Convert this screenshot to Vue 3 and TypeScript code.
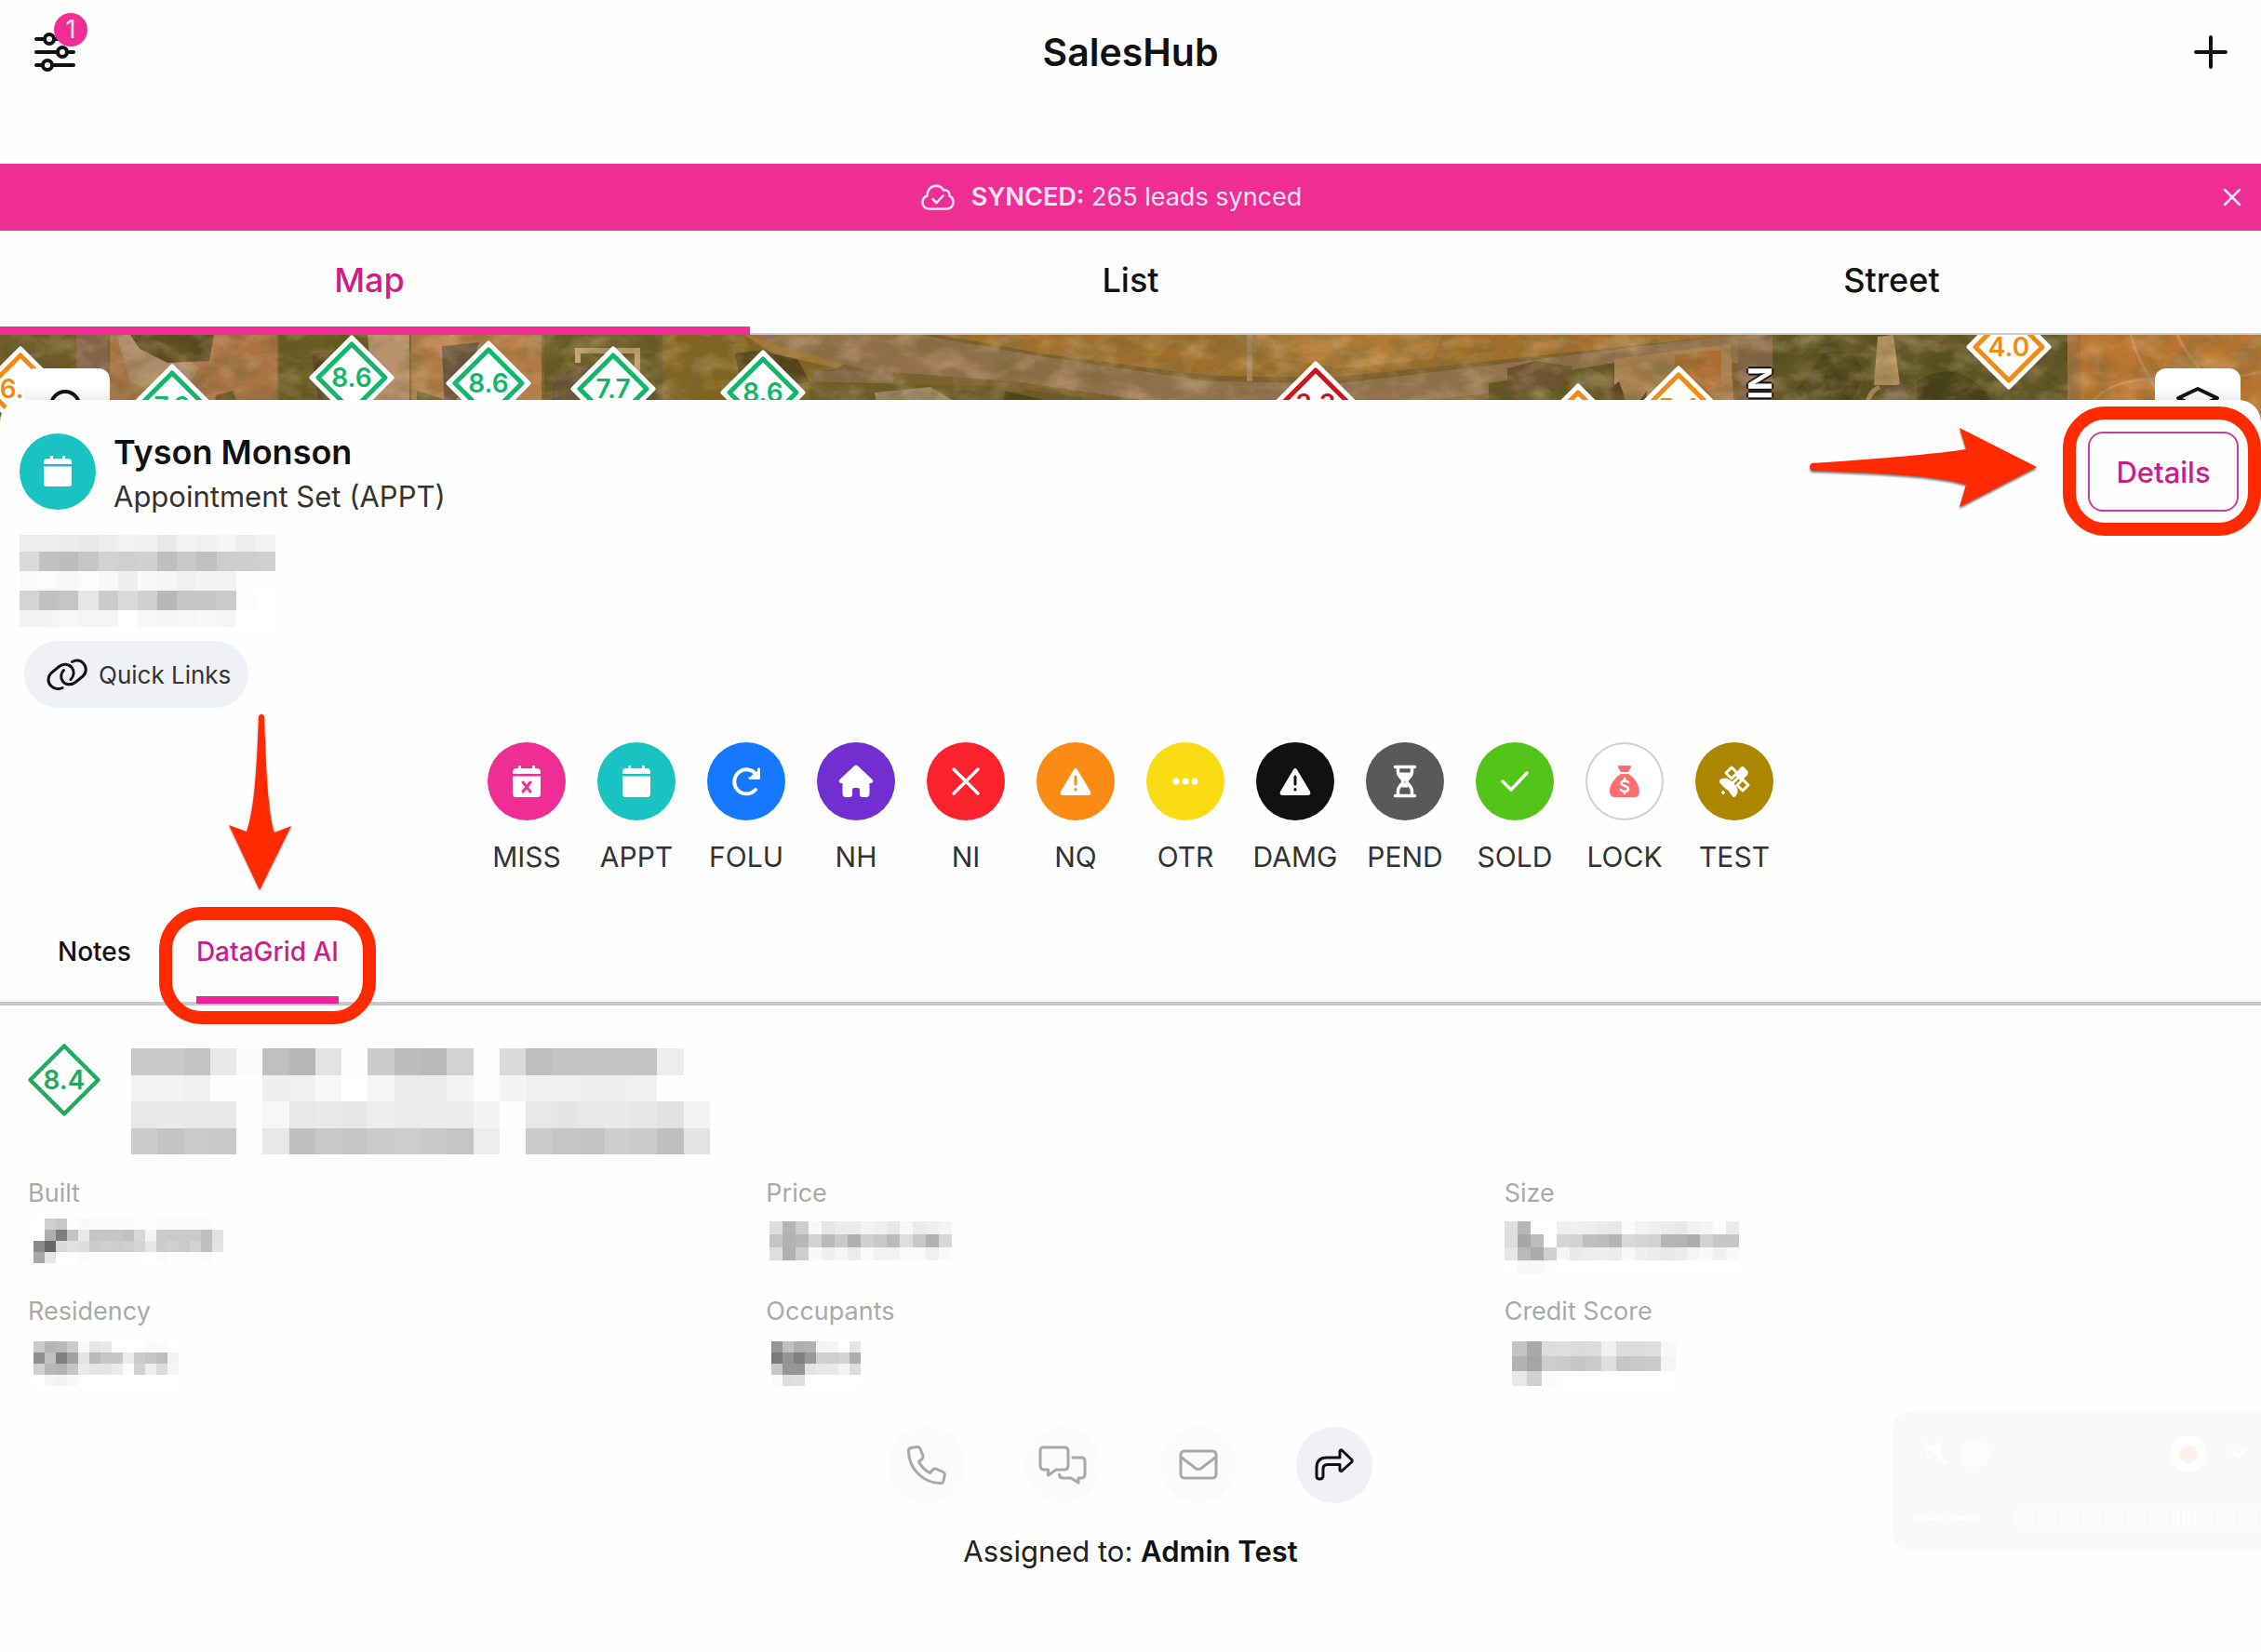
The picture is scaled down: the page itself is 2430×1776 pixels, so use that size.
<script setup lang="ts">
import { h, ref } from 'vue'

interface Status { code: string; color: string; icon: string }
interface Pin { x: number; y: number; score: string; tone: string }
interface Fact { label: string; cell: number; rows: string[]; inset: number; drop: number }

const views = ['Map', 'List', 'Street']
const activeView = ref('Map')
const bannerOpen = ref(true)

const statuses: Status[] = [
  { code: 'MISS', color: '#ee2e94', icon: 'calendar-x' },
  { code: 'APPT', color: '#18c3c2', icon: 'calendar' },
  { code: 'FOLU', color: '#1677ff', icon: 'redo' },
  { code: 'NH', color: '#722ed1', icon: 'home' },
  { code: 'NI', color: '#f9222d', icon: 'cross' },
  { code: 'NQ', color: '#fa8c16', icon: 'warning' },
  { code: 'OTR', color: '#fadb14', icon: 'dots' },
  { code: 'DAMG', color: '#111111', icon: 'warning' },
  { code: 'PEND', color: '#595959', icon: 'hourglass' },
  { code: 'SOLD', color: '#52c41a', icon: 'check' },
  { code: 'LOCK', color: '#ffffff', icon: 'moneybag' },
  { code: 'TEST', color: '#ad8600', icon: 'satellite' },
]

const green = '#12b76a'
const orange = '#f08c14'
const pins: Pin[] = [
  { x: 22, y: 58, score: '6.4', tone: orange },
  { x: 185, y: 77, score: '7.9', tone: green },
  { x: 378, y: 46, score: '8.6', tone: green },
  { x: 525, y: 52, score: '8.6', tone: green },
  { x: 659, y: 58, score: '7.7', tone: green },
  { x: 820, y: 62, score: '8.6', tone: green },
  { x: 1414, y: 74, score: '3.3', tone: '#c8161d' },
  { x: 1696, y: 98, score: '5.1', tone: orange },
  { x: 1804, y: 79, score: '5.4', tone: orange },
  { x: 2159, y: 13, score: '4.0', tone: orange },
]

// Each pair of hex digits is one grey cell of a redacted value.
const address = [
  'eeedebe9edf2f1e8f3f0f5edf3',
  'dac1bdc6d2cfd1bfc9c0cdced0',
  'fafcf7fcf8eff9f6f0f4f2fefe',
  'd4c0c5e6cbdad0b8c6c6cafdff',
  'f3f4f7f5f5fff8f6f7f9f5ffff',
]
const summary = [
  'c9c9c3e9fac0b6e3fdcbbdb9d2fddabec4c4c4c3edfe',
  'f3f3f0fdfeeff0f8fff5ebecf4fef4f0f1efeff0fefe',
  'e8eae9e8fef7e8eae7edebebecf4fee8e5e8eae7e1f3',
  'cbc4cac8fce8bfc8c5cbcdc9c5edfccbc5c4cecbbfe3',
]
const facts: Fact[] = [
  { label: 'Built', cell: 12, inset: 6, drop: 9, rows: [
    'ffcfc8fef9fbfbfbfbfdfefafbfafbfafe',
    'ffae7ec4e9c5c6c6c1d7f4cccacacabee2',
    '8a66dae2ddcccfcdcfd4e6ccd1cad2bfe3',
    'a8e6fffffbfefdfefdfdfffbfefcfefbfe'] },
  { label: 'Price', cell: 14, inset: 4, drop: 12, rows: [
    'deb4cef8e6ebebf3efe7f7ebeff4',
    'c5b2b7d2b9c9b0d0c9bbdfc8b1d7',
    'deb0cef9eff6ecfaf2f2fafaf0f9'] },
  { label: 'Size', cell: 14, inset: 0, drop: 12, rows: [
    'dfb6ffffeff0eeeae8fbf3efebe8f1f5fdeb',
    'dea6bcffd5d3bfbdb4d9d5d2b5b4add2c7c7',
    'e6b9abd0f6e9edeeebf8efebe8ecf5f9eff9',
    'fff8f8fcffffffffffffffffffffffffffff'] },
  { label: 'Residency', cell: 12, inset: 6, drop: 14, rows: [
    'cbb5b9cbf8e5e9fffffffafbff',
    '90c07fa1e4bac6c7eccbc5bef3',
    'd0b7b2c6eae5e4ebfbd1efddf5',
    'fff6f3f9ffffffffffffffffff'] },
  { label: 'Occupants', cell: 12, inset: 6, drop: 14, rows: [
    '96c0aeb1f3f5ffe5',
    '7a948098cfcfd3ae',
    'c79696e3e8e9f3dd',
    'fadddfffffffffff'] },
  { label: 'Credit Score', cell: 16, inset: 8, drop: 14, rows: [
    'c4a9dddedbddf0dddddef8',
    'b3a5cdcac6cae0c6c9caf5',
    'e8d1fbffffffffffffffff'] },
]

function Mosaic(props: { rows: string[]; cell: number; top?: number; width?: number; height?: number }) {
  const { rows, cell } = props
  const top = props.top ?? 0
  const columns = rows[0].length / 2
  const boxHeight = rows.length * cell - top * 2
  const cells = rows.flatMap((row, y) =>
    (row.match(/../g) ?? []).map((v, x) =>
      h('rect', { x: x * cell, y: y * cell, width: cell, height: cell, fill: `#${v}${v}${v}` })))
  return h('svg', {
    width: props.width ?? columns * cell,
    height: props.height ?? boxHeight,
    viewBox: `0 ${top} ${columns * cell} ${boxHeight}`,
    preserveAspectRatio: 'none',
    'shape-rendering': 'crispEdges', role: 'img', 'aria-label': 'Hidden',
    style: 'display:block',
  }, cells)
}
Mosaic.props = ['rows', 'cell', 'top', 'width', 'height']

const bars = Array.from({ length: 45 }, (_, i) => 131 + i * 6)
</script>

<template>
  <div class="app">
    <header class="topbar">
      <button class="icon-button filters" aria-label="Filters, 1 active">
        <svg width="46" height="46" viewBox="0 0 46 46" fill="none" stroke="#111" stroke-width="4" stroke-linecap="round">
          <path d="M3 9H11M23 9H43M3 23H25M37 23H43M3 37H9M21 37H43" />
          <circle cx="17" cy="9" r="5" /><circle cx="31" cy="23" r="5" /><circle cx="15" cy="37" r="5" />
        </svg>
        <span class="badge">1</span>
      </button>
      <h1>SalesHub</h1>
      <button class="icon-button add" aria-label="Add">
        <svg width="36" height="36" viewBox="0 0 36 36" stroke="#111" stroke-width="4" stroke-linecap="round"><path d="M18 2V34M2 18H34" /></svg>
      </button>
    </header>

    <div v-if="bannerOpen" class="banner" role="status">
      <p>
        <svg width="36" height="28" viewBox="0 0 36 28" fill="none" stroke="#ffe3f3" stroke-width="2.5" stroke-linecap="round" stroke-linejoin="round">
          <path d="M9 26.5C4.500 26.500 1.500 23.500 1.500 19.500C1.500 16 3.500 13.500 6.500 12.500C6 6.500 10.500 1.800 16 1.800C20 1.800 22.500 3.500 24 6.500C28 5.500 31 8.500 30.300 12.500C33 13.800 34.500 16.500 34.500 19.500C34.500 23.500 31.500 26.500 27.500 26.500Z" />
          <path d="M12.500 16L16.500 20L23.500 12.500" />
        </svg>
        <span><strong>SYNCED:</strong> 265 leads synced</span>
      </p>
      <button class="icon-button" aria-label="Dismiss" @click="bannerOpen = false">
        <svg width="20" height="20" viewBox="0 0 20 20" stroke="#ffe3f3" stroke-width="2.500" stroke-linecap="round"><path d="M2 2L18 18M18 2L2 18" /></svg>
      </button>
    </div>

    <nav class="views">
      <div class="views-track">
        <button v-for="v in views" :key="v" :class="{ active: v === activeView }" @click="activeView = v">{{ v }}</button>
      </div>
    </nav>

    <section class="map" aria-label="Map">
      <svg class="terrain" viewBox="0 0 2430 110" preserveAspectRatio="xMidYMin slice" aria-hidden="true">
        <defs>
          <filter id="grain" x="0" y="0" width="100%" height="100%">
            <feTurbulence type="fractalNoise" baseFrequency="0.03 0.04" numOctaves="5" seed="8" />
            <feColorMatrix values="0 0 0 0 0.2  0 0 0 0 0.14  0 0 0 0 0.04  2.4 0 0 0 -0.900" />
          </filter>
          <filter id="dust" x="0" y="0" width="100%" height="100%">
            <feTurbulence type="fractalNoise" baseFrequency="0.03 0.05" numOctaves="5" seed="21" />
            <feColorMatrix values="0 0 0 0 0.82  0 0 0 0 0.58  0 0 0 0 0.34  0 1.600 0 0 -0.700" />
          </filter>
        </defs>
        <rect width="2430" height="110" fill="#7b5f2c" />
        <path d="M0 0H82V110H0Z" fill="#675824" />
        <path d="M82 0H116V110H82Z" fill="#84634a" />
        <path d="M118 0H298V110H118Z" fill="#ab7343" />
        <path d="M125 0H160L215 35L190 72L140 50Z" fill="#ac8c6a" />
        <path d="M140 0H230L225 28L180 30L150 15Z" fill="#584a1f" />
        <path d="M232 65L250 60L262 90L240 110H225Z" fill="#6e5426" />
        <path d="M300 0H395L420 60L410 110H300Z" fill="#635a20" />
        <path d="M335 20L395 15L400 70L345 90Z" fill="#54401f" />
        <path d="M395 0H440V110H405Z" fill="#b9936d" />
        <path d="M442 0H582V110H442Z" fill="#b47c46" />
        <path d="M448 60L480 70V110H448Z" fill="#57501b" />
        <path d="M475 12L515 8L500 60L478 80Z" fill="#65513d" />
        <path d="M585 0H712V110H585Z" fill="#645a22" />
        <path d="M595 45L640 30V110H590Z" fill="#5e4a36" />
        <path d="M618 14H685V20H624V30H618ZM682 14H688V50H694V56H682Z" fill="#c0a578" />
        <path d="M715 0H875V110H715Z" fill="#80641e" />
        <path d="M790 20L850 12L870 50L800 70Z" fill="#54431b" />
        <path d="M800 0H960L900 36L830 20Z" fill="#a37833" />
        <path d="M875 40L960 35V110H875Z" fill="#87684b" />
        <path d="M800 0H990L1110 22L1300 50L1440 52L1640 28L1860 0H1900L1870 30L1660 56L1450 80L1280 78L1090 50L930 38Z" fill="#93714f" />
        <path d="M1010 0H1860L1640 24L1430 46L1300 44L1120 20Z" fill="#a0702a" />
        <path d="M1350 0H1550L1540 26L1440 36L1355 22Z" fill="#b07c34" />
        <path d="M1340 0H1346V50H1340Z" fill="#a88a62" />
        <path d="M870 50L1080 56L1270 82L1340 84V110H870Z" fill="#6b5926" />
        <path d="M940 62L1000 56L1040 80L1010 110H950Z" fill="#9b8a68" />
        <path d="M1080 60L1130 72L1120 110H1075Z" fill="#4c461a" />
        <path d="M1180 76L1320 84V92L1180 86ZM1300 96H1350V102H1300Z" fill="#b09160" />
        <path d="M1450 82L1600 68L1610 110H1440Z" fill="#6c5b25" />
        <path d="M1465 78L1580 72V78L1465 84ZM1470 90L1530 88V93L1470 96Z" fill="#b09160" />
        <path d="M1600 52L1735 30V110H1600Z" fill="#5c5420" />
        <path d="M1620 36L1650 28L1690 34L1680 56L1620 64Z" fill="#69502f" />
        <path d="M1735 26L1860 10L1865 110H1735Z" fill="#a9814f" />
        <path d="M1728 60L1740 50L1752 84L1770 60L1766 90L1740 96Z" fill="#5b4124" />
        <path d="M1800 22L1850 16V60L1800 72Z" fill="#ad6c2f" />
        <path d="M1868 6L1915 0L1905 110H1870Z" fill="#826247" />
        <path d="M1905 0H2225V110H1905Z" fill="#575120" />
        <path d="M1960 20C1990 10 2010 30 1996 60C1980 90 1940 90 1930 60Z" fill="#48421a" />
        <path d="M2060 50C2090 30 2120 40 2140 70L2130 110H2060Z" fill="#454018" />
        <path d="M2018 2L2035 0L2042 54H2014Z" fill="#b3905f" />
        <path d="M2026 58L2044 52L2056 80L2050 104L2026 96Z" fill="#6a5846" />
        <path d="M2020 56C2002 64 2004 90 2010 110" fill="none" stroke="#a38456" stroke-width="5" />
        <path d="M2222 0H2236V110H2222Z" fill="#a0713c" />
        <path d="M2236 0H2430V110H2236Z" fill="#b87630" />
        <path d="M2290 0C2300 40 2330 70 2340 110M2340 0C2350 25 2380 50 2410 110M2250 70C2290 30 2350 60 2430 40" fill="none" stroke="#c88c50" stroke-width="3" />
        <rect width="2430" height="110" filter="url(#grain)" opacity="0.550" />
        <rect width="2430" height="110" filter="url(#dust)" opacity="0.500" />
      </svg>
      <div v-for="p in pins" :key="p.x" class="pin" :style="{ left: p.x + 'px', top: p.y + 'px', color: p.tone }">
        <svg width="94" height="94" viewBox="0 0 94 94" aria-hidden="true">
          <path d="M47 4L90 47L47 90L4 47Z" fill="#fff" stroke="#fff" stroke-width="5" stroke-linejoin="round" />
          <path d="M47 11L83 47L47 83L11 47Z" fill="none" stroke="currentColor" stroke-width="5" stroke-linejoin="round" />
        </svg>
        <span>{{ p.score }}</span>
      </div>
      <span class="street-name">NI</span>
      <button class="map-tool search" aria-label="Search map">
        <svg width="44" height="44" viewBox="0 0 44 44" fill="none" stroke="#111" stroke-width="4" stroke-linecap="round"><circle cx="20" cy="18" r="15" /><path d="M31 29L41 40" /></svg>
      </button>
      <button class="map-tool layers" aria-label="Map layers">
        <svg width="50" height="44" viewBox="0 0 50 44" fill="none" stroke="#111" stroke-width="4" stroke-linecap="round" stroke-linejoin="round"><path d="M25 4L46 14L25 24L4 14ZM4 24L25 34L46 24" /></svg>
      </button>
    </section>

    <main class="sheet">
      <div class="lead">
        <span class="avatar">
          <svg width="30" height="34" viewBox="0 0 30 34" fill="#fff"><path d="M7 0H10V3H20V0H23V3H26Q30 3 30 7V9H0V7Q0 3 4 3H7ZM0 11.500H30V30Q30 33 27 33H3Q0 33 0 30Z" /></svg>
        </span>
        <div class="who">
          <h2>Tyson Monson</h2>
          <p>Appointment Set (APPT)</p>
        </div>
        <div class="details">
          <button>Details</button>
          <span class="callout" aria-hidden="true"></span>
          <svg class="arrow-right" width="248" height="94" viewBox="0 0 248 94" aria-hidden="true">
            <path d="M5 42C70 38 140 32 171 27L164 4L247 46L164 89L171 65C140 55 70 52 5 50Q1 46 5 42Z" fill="#ff2a00" />
          </svg>
        </div>
      </div>

      <div class="address"><Mosaic :rows="address" :cell="21" :top="3" :width="275" /></div>

      <button class="quick-links">
        <svg width="44" height="34" viewBox="0 0 44 34" fill="none" stroke="#111" stroke-width="3" stroke-linecap="round">
          <path d="M17 31.500C13 33.500 8 32.500 5 29.500C0.500 25 1.500 19 5 15.500L13.500 8.500C18 5 24 5.500 27.500 10C30 14 29.500 19 26 22.500" />
          <path d="M27.500 3.500C31.500 1 36.500 1.500 39.500 5C43.500 9.500 43 15.500 39 19L31 25.500C26.500 29 20.500 28.500 17.500 24.500C14.500 20.500 15.500 15.500 18.500 12.500" />
        </svg>
        Quick Links
      </button>

      <ul class="statuses">
        <li v-for="s in statuses" :key="s.code">
          <button>
            <span class="dot" :class="{ outlined: s.icon === 'moneybag' }" :style="{ background: s.color }">
              <svg width="40" height="40" viewBox="0 0 40 40" fill="none" stroke-linecap="round" stroke-linejoin="round" aria-hidden="true">
                <g v-if="s.icon.startsWith('calendar')">
                  <path fill="#fff" d="M11 3H14V6H26V3H29V6H31Q35 6 35 10V12H5V10Q5 6 9 6H11ZM5 14.500H35V33Q35 37 32 37H8Q5 37 5 33Z" />
                  <path v-if="s.icon === 'calendar-x'" :stroke="s.color" stroke-width="3" d="M16 21L24 31M24 21L16 31" />
                </g>
                <g v-else-if="s.icon === 'redo'" stroke="#fff">
                  <path stroke-width="4" d="M31 13A13 13 0 1 0 30 29" />
                  <path fill="#fff" stroke-width="1" d="M34 6V17H23L27 13L31 11Z" />
                  <path stroke-width="3" d="M33.500 7V16.500H24" />
                </g>
                <path v-else-if="s.icon === 'home'" fill="#fff" d="M18.500 3Q20 2 21.500 3L38 18.500Q39 21.500 36 22H34.500V33Q34.500 37 31 37H27Q24 37 24 34V29Q24 27 22 27H18Q16 27 16 29V34Q16 37 13 37H9Q5.500 37 5.500 33V22H4Q1 21.500 2 18.500Z" />
                <path v-else-if="s.icon === 'cross'" stroke="#fff" stroke-width="3.500" d="M7 7L33 33M33 7L7 33" />
                <g v-else-if="s.icon === 'warning'">
                  <path fill="#fff" d="M18 7.500Q20 4 22 7.500L36 31Q37.500 35 33 35H7Q2.500 35 4 31Z" />
                  <path :stroke="s.color" stroke-width="3" d="M20 15V23M20 28.500V29" />
                </g>
                <g v-else-if="s.icon === 'dots'" fill="#fff"><circle cx="10" cy="20" r="3.500" /><circle cx="20" cy="20" r="3.500" /><circle cx="30" cy="20" r="3.500" /></g>
                <g v-else-if="s.icon === 'hourglass'" stroke="#fff">
                  <path stroke-width="3.500" d="M9.500 4.500H30.500M9.500 35.500H30.500" />
                  <path stroke-width="3.500" d="M12.500 5V10C12.500 15 18 17 18 20S12.500 25 12.500 30V35M27.500 5V10C27.500 15 22 17 22 20S27.500 25 27.500 30V35" />
                  <path fill="#fff" d="M14 11H26L21 19H19ZM19 22H21L23 26H17Z" />
                </g>
                <path v-else-if="s.icon === 'check'" stroke="#fff" stroke-width="3.500" d="M7 20L16 29L33 11" />
                <g v-else-if="s.icon === 'moneybag'">
                  <path fill="#ff6f70" d="M14 3H26Q28 3.500 27 5L24 10H16L13 5Q12 3.500 14 3ZM16 12H24C31 16 36 24 36 31Q36 37 30 37H10Q4 37 4 31C4 24 9 16 16 12Z" />
                  <path stroke="#fff" stroke-width="2.500" d="M24 21C22 18.500 16.500 19 16.500 22S24 24.500 24 28S18 31.500 16 29M20 17V19M20 31V33" />
                </g>
                <g v-else fill="#fff" stroke="#fff">
                  <path stroke-width="3" fill="none" d="M17 5L23 11L17 17L11 11ZM29 18L35 24L29 30L23 24Z" />
                  <path stroke-width="2" d="M27 6L29 5L34 10L33 13L27 18L22 13ZM5 19C9 16 14 18 18 22C22 26 24 31 21 35L19 36L14 29L11 27L5 21Z" />
                  <path stroke-width="3" d="M18 22L24 16" />
                  <circle cx="8" cy="32" r="1.500" />
                </g>
              </svg>
            </span>
            <span class="code">{{ s.code }}</span>
          </button>
        </li>
      </ul>

      <nav class="panels">
        <button>Notes</button>
        <div class="marked">
          <button class="active">DataGrid AI</button>
          <span class="callout" aria-hidden="true"></span>
          <svg class="arrow-down" width="70" height="194" viewBox="0 0 70 194" aria-hidden="true">
            <path d="M33 4Q36 -1 39 4C41 62 43 108 50 129L68 122L34 191L1 121L20 128C28 106 31 62 33 4Z" fill="#ff2a00" />
          </svg>
        </div>
      </nav>

      <div class="score-row">
        <div class="score">
          <svg width="80" height="80" viewBox="0 0 80 80" fill="none" stroke="#22ab5e" stroke-width="4.500" stroke-linejoin="round" aria-hidden="true"><path d="M40 3.500L76.500 40L40 76.500L3.500 40Z" /></svg>
          <span>8.4</span>
        </div>
        <Mosaic :rows="summary" :cell="28" :width="622" :height="114" />
      </div>

      <dl class="facts">
        <div v-for="f in facts" :key="f.label">
          <dt>{{ f.label }}</dt>
          <dd :style="{ paddingLeft: f.inset + 'px', paddingTop: f.drop + 'px' }"><Mosaic :rows="f.rows" :cell="f.cell" /></dd>
        </div>
      </dl>

      <div class="actions">
        <button disabled aria-label="Call">
          <svg width="42" height="42" viewBox="0 0 42 42"><path d="M4 2.500L11 1.500Q13 1.500 14 3.500L17 11Q17.500 13 16 14.500L12.500 17.500C15 22.500 19.500 27 24.500 29.500L27.500 26Q29 24.500 31 25L38.500 28.500Q40.500 29.500 40.500 31L39 38Q38.500 40.500 36 40.500C17 40.500 1.500 25 1.500 5.500Q1.500 3.500 4 2.500Z" /></svg>
        </button>
        <button disabled aria-label="Message">
          <svg width="52" height="42" viewBox="0 0 52 42"><path d="M5 2H28Q32 2 32 6V21Q32 26 28 26H19L10.500 32V26H6Q2 26 2 21V6Q2 2 5 2ZM37 13H46Q50 13 50 17V31Q50 35 46 35H43V40L35 35H27Q22.500 35 22.500 31" /></svg>
        </button>
        <button disabled aria-label="Email">
          <svg width="42" height="34" viewBox="0 0 42 34"><rect x="2" y="2" width="38" height="29" rx="4" /><path d="M3 9L18 20.500Q21 22.500 24 20.500L39 9" /></svg>
        </button>
        <button class="share" aria-label="Share">
          <svg width="42" height="36" viewBox="0 0 42 36"><path d="M27 10V3Q27.500 1 29.500 2.500L39.500 12Q41 13.500 39.500 15L29.500 24Q27.500 25.500 27 23.500V17.500H14Q9 17.500 9 22V30Q8.500 33 5.500 33Q2 33 2 30V21Q2 10 13 10Z" /></svg>
        </button>
      </div>

      <p class="assigned">Assigned to: <strong>Admin Test</strong></p>
    </main>

    <aside class="recorder" aria-label="Recorder">
      <svg width="396" height="150" viewBox="0 0 396 150" fill="#fff" stroke-linecap="round" stroke-linejoin="round">
        <path d="M37 40L50 34Q52 32 52.500 35V52L37 40ZM37 45L52 58Q52 55 47 53L42 50H37Z" />
        <path d="M36 35L57 56" stroke="#fff" stroke-width="3" />
        <circle cx="88" cy="46" r="16" fill="#fcfcfc" />
        <circle cx="318" cy="46" r="19.500" /><circle cx="318" cy="46" r="10" fill="#ffefef" />
        <path d="M366 43L372 48L378 43" fill="none" stroke="#fff" stroke-width="4" />
        <path d="M26 115H37M41 115H52M63 115H74M78 115H89M57.500 111V111M57.500 120V120" stroke="#fff" stroke-width="3" />
        <rect v-for="b in bars" :key="b" :x="b" y="106" width="4" height="18" :fill="b > 303 && b < 329 ? '#fff' : '#fcfcfc'" />
      </svg>
    </aside>
  </div>
</template>

<style>
body { margin: 0; background: #fefefe; }
</style>

<style scoped>
.app {
  position: relative;
  display: flex;
  flex-direction: column;
  min-height: 100vh;
  overflow: hidden;
  background: #fefefe;
  color: #111;
  font-family: Inter, Roboto, "Liberation Sans", sans-serif;
}
button {
  margin: 0;
  padding: 0;
  border: 0;
  background: none;
  color: inherit;
  font: inherit;
}
h1, h2, p, ul, dl, dd { margin: 0; padding: 0; }
svg { display: block; flex: none; }
.icon-button { position: relative; display: flex; }

.topbar {
  display: grid;
  grid-template-columns: 1fr auto 1fr;
  align-items: center;
  height: 112px;
  padding: 0 36px 64px;
}
.topbar h1 { font-size: 41px; line-height: 48px; font-weight: 600; }
.filters { justify-self: start; }
.add { justify-self: end; }
.badge {
  position: absolute;
  left: 22px;
  top: -19px;
  width: 36px;
  border-radius: 18px;
  background: #ee2e94;
  color: #ffe3f3;
  font-size: 27px;
  line-height: 36px;
  text-align: center;
}

.banner {
  display: flex;
  align-items: center;
  height: 72px;
  padding-right: 21px;
  background: #ee2e94;
  color: #ffe3f3;
}
.banner p {
  display: flex;
  flex: 1;
  align-items: center;
  justify-content: center;
  gap: 18px;
  font-size: 27px;
  line-height: 36px;
}
.banner strong { font-weight: 600; }

.views { border-bottom: 2px solid #cfccd2; }
.views-track { display: flex; margin: 0 -12px; }
.views button {
  flex: 1;
  height: 112px;
  margin-bottom: -2px;
  padding-top: 2px;
  border-bottom: 9px solid transparent;
  font-size: 36px;
  font-weight: 500;
  line-height: 44px;
}
.views .active { position: relative; z-index: 1; border-color: #ee2e94; color: #d11b86; }

.map { position: relative; height: 70px; margin-bottom: -24px; padding-bottom: 24px; overflow: hidden; }
.terrain { width: 100%; height: 110px; }
.pin { position: absolute; width: 94px; height: 94px; margin: -47px 0 0 -47px; }
.pin span {
  position: absolute;
  inset: 0;
  font-size: 28px;
  font-weight: 600;
  line-height: 94px;
  text-align: center;
}
.street-name {
  position: absolute;
  left: 1874px;
  top: 34px;
  color: #fff;
  font-size: 34px;
  font-weight: 700;
  line-height: 34px;
  white-space: nowrap;
  writing-mode: vertical-rl;
  text-shadow: 2px 0 #111, -2px 0 #111, 0 2px #111, 0 -2px #111;
}
.map-tool {
  position: absolute;
  top: 36px;
  display: flex;
  justify-content: center;
  width: 92px;
  height: 92px;
  padding-top: 22px;
  border-radius: 12px;
  background: linear-gradient(#fff 20%, #e4e4e4 50%);
}
.search { left: 26px; }
.layers { right: 22px; padding-top: 18px; }

.sheet {
  position: relative;
  flex: 1;
  padding-top: 32px;
  border-radius: 24px 24px 0 0;
  background: #fefefe;
}
.lead { display: flex; align-items: flex-start; padding: 0 24px 0 21px; }
.avatar {
  display: flex;
  align-items: center;
  justify-content: center;
  width: 82px;
  height: 82px;
  margin: 4px 19px 0 0;
  border-radius: 50%;
  background: #18c3c2;
}
.who { flex: 1; line-height: 48px; }
.who h2 { font-size: 36px; line-height: 48px; font-weight: 600; }
.who p { color: #333; font-size: 31px; }
.details { position: relative; margin-top: 2px; }
.details button {
  display: block;
  width: 162px;
  height: 86px;
  border: 2px solid #cb3f98;
  border-radius: 16px;
  color: #cb1d89;
  font-size: 31px;
  font-weight: 500;
}
.callout {
  position: absolute;
  border: 14px solid #ff2a00;
  border-radius: 46px;
  pointer-events: none;
}
.details .callout { inset: -27px -24px -26px -27px; }
.arrow-right { position: absolute; right: 216px; top: -8px; filter: drop-shadow(0 2px 1px #777); }

.address { margin: 17px 0 0 21px; }
.quick-links {
  display: flex;
  align-items: center;
  gap: 12px;
  height: 72px;
  margin: 15px 0 0 26px;
  padding: 0 19px 0 24px;
  border-radius: 36px;
  background: #f0f1f6;
  color: #333;
  font-size: 26px;
}

.statuses { display: flex; justify-content: center; margin-top: 37px; list-style: none; }
.statuses li { width: 118px; }
.statuses button { display: flex; flex-direction: column; align-items: center; gap: 19px; width: 100%; }
.dot {
  display: flex;
  align-items: center;
  justify-content: center;
  width: 84px;
  height: 84px;
  border-radius: 50%;
}
.outlined { box-shadow: inset 0 0 0 2px #d0d0d0; }
.code { color: #333; font-size: 30px; line-height: 40px; }

.panels {
  display: flex;
  gap: 70px;
  height: 100px;
  margin-top: 40px;
  padding-left: 62px;
  box-shadow: inset 0 -4px #c9c6cd;
}
.panels button {
  display: block;
  height: 98px;
  padding: 0 0 7px;
  border-bottom: 8px solid transparent;
  font-size: 28px;
  font-weight: 500;
}
.panels .active { border-color: #ee1f97; color: #cb1d89; }
.marked { position: relative; }
.marked .callout { inset: -6px -40px -20px; }
.arrow-down { position: absolute; left: 34px; top: -215px; filter: drop-shadow(0 1px 1px #999); }

.score-row { display: flex; gap: 32px; align-items: flex-start; padding: 40px 0 0 29px; }
.score-row > svg { margin-top: 6px; }
.score { position: relative; width: 80px; color: #22ab5e; }
.score span {
  position: absolute;
  inset: 0;
  font-size: 28px;
  font-weight: 600;
  line-height: 80px;
  text-align: center;
}

.facts {
  display: grid;
  grid-template-columns: repeat(3, 1fr);
  grid-auto-rows: 127px;
  margin-top: 24px;
  padding: 0 20px 0 30px;
}
.facts dt { color: #a9a9a9; font-size: 27px; line-height: 36px; }

.actions { display: flex; justify-content: center; gap: 64px; margin-top: 15px; }
.actions button {
  display: flex;
  align-items: center;
  justify-content: center;
  width: 82px;
  height: 82px;
  border-radius: 50%;
  background: #fbfbfe;
  color: #a8a8a8;
}
.actions svg { fill: none; stroke: currentColor; stroke-width: 3; stroke-linecap: round; stroke-linejoin: round; }
.actions .share { background: #f0f1f6; color: #111; }
.assigned { margin-top: 32px; color: #222; font-size: 31px; line-height: 40px; text-align: center; }
.assigned strong { color: #111; font-weight: 600; }

.recorder {
  position: absolute;
  right: 0;
  bottom: 109px;
  border-radius: 20px 0 0 20px;
  background: #f9f9f9;
}
</style>
